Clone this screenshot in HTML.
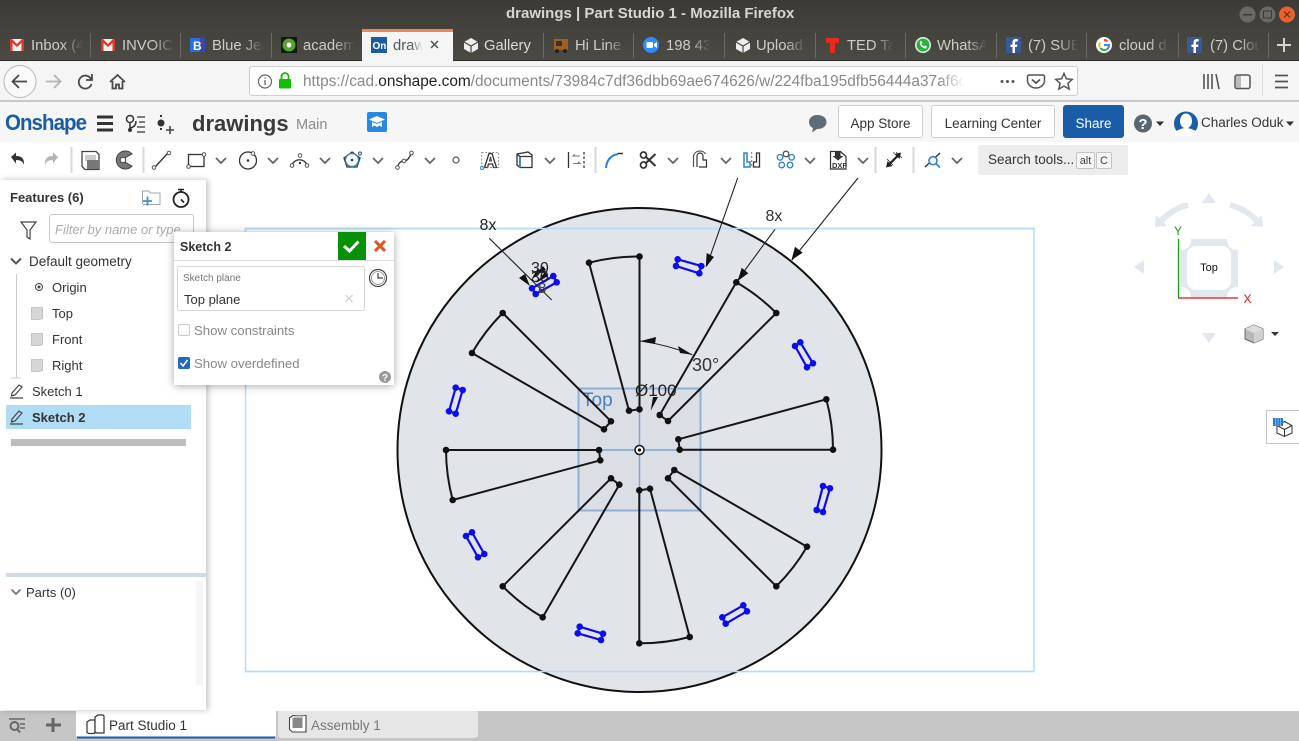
<!DOCTYPE html>
<html><head><meta charset="utf-8"><style>
html,body{margin:0;padding:0;width:1299px;height:741px;overflow:hidden;background:#fff;font-family:"Liberation Sans",sans-serif}
svg{position:absolute;left:0;top:0}
.t{position:absolute;white-space:nowrap;line-height:1}
.tab{position:absolute;top:38px;font-size:14.8px;line-height:16px;color:#cfcdc6;white-space:nowrap;overflow:hidden;width:52px;-webkit-mask-image:linear-gradient(90deg,#000 60%,transparent 100%);mask-image:linear-gradient(90deg,#000 60%,transparent 100%)}
.b{position:absolute;box-sizing:border-box}
.btn{position:absolute;top:105px;height:33px;box-sizing:border-box;border:1px solid #cfcfcf;border-radius:3px;background:#fff;font-size:13.5px;color:#333;text-align:center;line-height:35px}
</style></head><body>

<div class="b" style="left:0;top:0;width:1299px;height:60px;background:linear-gradient(#3b3a36,#4c4a44)"></div>
<div class="b" style="left:0;top:60px;width:1299px;height:40px;background:#f5f5f5"></div>
<div class="b" style="left:0;top:100px;width:1299px;height:2px;background:#c8c8c8"></div>
<div class="b" style="left:0;top:102px;width:1299px;height:40px;background:#f6f6f6"></div>
<div class="b" style="left:0;top:142px;width:1299px;height:36px;background:#fff"></div>
<div class="b" style="left:362px;top:29px;width:91px;height:31px;background:#f5f5f5;border-top:3px solid #ea8560"></div>

<div class="t" style="left:506px;top:6px;font-size:15px;font-weight:bold;color:#d8d6cf">drawings | Part Studio 1 - Mozilla Firefox</div>

<div class="tab" style="left:31px">Inbox (4</div>
<div class="tab" style="left:122px">INVOICE</div>
<div class="tab" style="left:212px">Blue Jeans</div>
<div class="tab" style="left:303px">academy</div>
<div class="tab" style="left:393px;width:30px;color:#555">drawings</div>
<div class="tab" style="left:484px;color:#dedcd5;width:60px;-webkit-mask-image:none;mask-image:none">Gallery</div>
<div class="tab" style="left:575px">Hi Line</div>
<div class="tab" style="left:666px;width:44px">198 434</div>
<div class="tab" style="left:756px;width:50px">Upload</div>
<div class="tab" style="left:847px;width:46px">TED Talks</div>
<div class="tab" style="left:937px;width:50px">WhatsApp</div>
<div class="tab" style="left:1028px;width:50px">(7) SUB</div>
<div class="tab" style="left:1119px;width:50px">cloud d</div>
<div class="tab" style="left:1210px;width:50px">(7) Cloud</div>

<!-- URL bar -->
<div class="b" style="left:249px;top:66px;width:829px;height:30px;background:#fff;border:1px solid #cfcfcf;border-radius:3px"></div>
<div class="t" style="left:303px;top:73px;font-size:15.4px;line-height:17px;color:#888;width:662px;overflow:hidden;-webkit-mask-image:linear-gradient(90deg,#000 96%,transparent 100%);mask-image:linear-gradient(90deg,#000 96%,transparent 100%)">https://cad.<span style="color:#222">onshape.com</span>/documents/73984c7df36dbb69ae674626/w/224fba195dfb56444a37af6c0</div>

<!-- Onshape bar -->
<div class="t" style="left:5px;top:112px;font-size:22px;font-weight:bold;color:#1b5ca6;letter-spacing:-1px;transform:scaleX(.93);transform-origin:left">Onshape</div>
<div class="t" style="left:192px;top:113px;font-size:22px;font-weight:bold;color:#3a3a3a">drawings</div>
<div class="t" style="left:296px;top:118px;font-size:14.5px;color:#8a8a8a">Main</div>
<div class="btn" style="left:838px;width:85px">App Store</div>
<div class="btn" style="left:931px;width:124px">Learning Center</div>
<div class="btn" style="left:1063px;width:61px;background:#1b5ca8;border-color:#1b5ca8;color:#fff">Share</div>
<div class="t" style="left:1201px;top:116px;font-size:13.5px;color:#333">Charles Oduk</div>
<div class="b" style="left:978px;top:145px;width:150px;height:30px;background:#ededed;border-radius:2px"></div>
<div class="t" style="left:988px;top:153px;font-size:13.5px;color:#333">Search tools...</div>
<div class="b" style="left:1076px;top:152px;width:19px;height:17px;background:#f5f5f5;border:1px solid #c4c4c4;border-radius:2px;font-size:11px;text-align:center;line-height:16px;color:#444">alt</div>
<div class="b" style="left:1096px;top:152px;width:16px;height:17px;background:#f5f5f5;border:1px solid #c4c4c4;border-radius:2px;font-size:11px;text-align:center;line-height:16px;color:#444">C</div>

<svg width="1299" height="741" viewBox="0 0 1299 741" style="pointer-events:none">
<!-- plane -->
<rect x="245.500" y="228.500" width="788.500" height="443" fill="#fff" stroke="#b5dcf3" stroke-width="1.500"/>
<circle cx="639.500" cy="450" r="242" fill="#e1e4e8" stroke="#111" stroke-width="2"/>
<line x1="245" y1="228.500" x2="1034" y2="228.500" stroke="#b5dcf3" stroke-width="1.500"/>
<line x1="245" y1="671.500" x2="1034" y2="671.500" stroke="#b5dcf3" stroke-width="1.500"/>
<rect x="578.500" y="388.500" width="122" height="122" fill="#d4d9e3" fill-opacity=".45" stroke="#7da3cf" stroke-width="2" stroke-opacity=".8"/>
<line x1="639.500" y1="388" x2="639.500" y2="511" stroke="#7da3cf" stroke-width="1.500"/>
<line x1="578" y1="450" x2="701" y2="450" stroke="#7da3cf" stroke-width="1.500"/>
<text x="582" y="406" font-size="19" fill="#4a80bd" font-family="Liberation Sans">Top</text>

<!-- wedges -->
<g fill="none" stroke="#151515" stroke-width="2" stroke-linejoin="round">
<path d="M639.500 409.300V256.500A194 194 0 0 0 589 262.700L629 410.700L639.500 409.300"/>
<path d="M736.300 282.300A194 194 0 0 1 776.300 313L668 421L659.700 415L736.300 282.300"/>
<path d="M502.700 313A194 194 0 0 0 472 353L604 429.300L611 421.300L502.700 313"/>
<path d="M826.300 399.300A194 194 0 0 1 833 449.700H679.700L678.300 439.300L826.300 399.300"/>
<path d="M446 450A194 194 0 0 0 452.700 500L600.300 460.300L599 450H446"/>
<path d="M611 478.300L619.300 484.700L542.700 617.300A194 194 0 0 1 502.700 586.300L611 478.300"/>
<path d="M639.300 490.300L650 488.700L689.700 637A194 194 0 0 1 639.300 643.300V490.300"/>
<path d="M674.300 470L668 478.300L776.300 586.300A194 194 0 0 0 807 546.700L674.300 470"/>
</g>
<g fill="#111">
<circle cx="639.500" cy="409.300" r="3.300"/><circle cx="639.500" cy="256.500" r="3.300"/><circle cx="589" cy="262.700" r="3.300"/><circle cx="629" cy="410.700" r="3.300"/>
<circle cx="736.300" cy="282.300" r="3.300"/><circle cx="776.300" cy="313" r="3.300"/><circle cx="668" cy="421" r="3.300"/><circle cx="659.700" cy="415" r="3.300"/>
<circle cx="502.700" cy="313" r="3.300"/><circle cx="472" cy="353" r="3.300"/><circle cx="604" cy="429.300" r="3.300"/><circle cx="611" cy="421.300" r="3.300"/>
<circle cx="826.300" cy="399.300" r="3.300"/><circle cx="833" cy="449.700" r="3.300"/><circle cx="679.700" cy="449.700" r="3.300"/><circle cx="678.300" cy="439.300" r="3.300"/>
<circle cx="446" cy="450" r="3.300"/><circle cx="452.700" cy="500" r="3.300"/><circle cx="600.300" cy="460.300" r="3.300"/><circle cx="599" cy="450" r="3.300"/>
<circle cx="611" cy="478.300" r="3.300"/><circle cx="619.300" cy="484.700" r="3.300"/><circle cx="542.700" cy="617.300" r="3.300"/><circle cx="502.700" cy="586.300" r="3.300"/>
<circle cx="639.300" cy="490.300" r="3.300"/><circle cx="650" cy="488.700" r="3.300"/><circle cx="689.700" cy="637" r="3.300"/><circle cx="639.300" cy="643.300" r="3.300"/>
<circle cx="674.300" cy="470" r="3.300"/><circle cx="668" cy="478.300" r="3.300"/><circle cx="776.300" cy="586.300" r="3.300"/><circle cx="807" cy="546.700" r="3.300"/>
</g>

<!-- slots -->
<g fill="none" stroke="#0c0cf0" stroke-width="2.200">
<path d="M677.700 259.300L701.300 266L699.300 273.300L676 266Z"/>
<path d="M800.300 342.300L813 363.300L807 367.300L795 346Z"/>
<path d="M455.700 387.700L462.700 390L455.700 413.700L449 411.300Z"/>
<path d="M553.300 276L556.700 282.300L535.700 294L532 288.300Z"/>
<path d="M823 486L830 488.300L823 512L816.700 510Z"/>
<path d="M472 532.300L484.300 554L478 557.300L466 536Z"/>
<path d="M579.700 626.700L603 633.700L601 640L577.700 633.300Z"/>
<path d="M743.300 605.300L747 611.300L725.700 623.700L722.300 617.300Z"/>
</g>
<g fill="#0c0cf0">
<circle cx="677.700" cy="259.300" r="3.300"/><circle cx="701.300" cy="266" r="3.300"/><circle cx="699.300" cy="273.300" r="3.300"/><circle cx="676" cy="266" r="3.300"/>
<circle cx="800.300" cy="342.300" r="3.300"/><circle cx="813" cy="363.300" r="3.300"/><circle cx="807" cy="367.300" r="3.300"/><circle cx="795" cy="346" r="3.300"/>
<circle cx="455.700" cy="387.700" r="3.300"/><circle cx="462.700" cy="390" r="3.300"/><circle cx="455.700" cy="413.700" r="3.300"/><circle cx="449" cy="411.300" r="3.300"/>
<circle cx="553.300" cy="276" r="3.300"/><circle cx="556.700" cy="282.300" r="3.300"/><circle cx="535.700" cy="294" r="3.300"/><circle cx="532" cy="288.300" r="3.300"/>
<circle cx="823" cy="486" r="3.300"/><circle cx="830" cy="488.300" r="3.300"/><circle cx="823" cy="512" r="3.300"/><circle cx="816.700" cy="510" r="3.300"/>
<circle cx="472" cy="532.300" r="3.300"/><circle cx="484.300" cy="554" r="3.300"/><circle cx="478" cy="557.300" r="3.300"/><circle cx="466" cy="536" r="3.300"/>
<circle cx="579.700" cy="626.700" r="3.300"/><circle cx="603" cy="633.700" r="3.300"/><circle cx="601" cy="640" r="3.300"/><circle cx="577.700" cy="633.300" r="3.300"/>
<circle cx="743.300" cy="605.300" r="3.300"/><circle cx="747" cy="611.300" r="3.300"/><circle cx="725.700" cy="623.700" r="3.300"/><circle cx="722.300" cy="617.300" r="3.300"/>
</g>

<!-- annotations -->
<g stroke="#222" stroke-width="1.100" fill="none">
<line x1="737.700" y1="178" x2="706.700" y2="266"/>
<line x1="858" y1="178" x2="792" y2="260"/>
<line x1="775" y1="229.300" x2="737.700" y2="280"/>
<line x1="489.300" y1="238.300" x2="551.700" y2="300"/>
<path d="M640.300 341Q668 345 692.300 354.700"/>
</g>
<g fill="#111">
<polygon points="705.700,267.500 706.700,253 714,257"/>
<polygon points="791.500,260 795,246.700 802.700,252.700"/>
<polygon points="737.700,281 741.700,267.700 748.300,273.300"/>
<polygon points="530,286 519,278 525,274"/>
<polygon points="641,341 656,337 655,344"/>
<polygon points="692.500,354.700 680,353 678,346"/>
<polygon points="650.700,410.700 653,397 658,397"/>
<polygon points="531,280 538,268 541,272"/>
<polygon points="536,283 545,272 548,276"/>
<polygon points="533,277 543,266 546,270"/>
</g>
<g font-family="Liberation Sans" font-size="16" fill="#222">
<text x="479.500" y="230">8x</text>
<text x="765.500" y="221" fill="#333">8x</text>
<text x="692" y="371" font-size="18" fill="#333">30°</text>
<text x="635" y="396" font-size="17" fill="#222">Ø100</text>
<text x="531" y="273" font-size="16">30</text>
<text x="531" y="282" font-size="16">30</text>
<text x="538" y="293" font-size="15" fill="#444">8</text>
</g>
<circle cx="639.500" cy="450" r="4.500" fill="#fff" stroke="#111" stroke-width="1.500"/><circle cx="639.500" cy="450" r="1.600" fill="#111"/>

<!-- nav cube -->
<g fill="#e3e8ee">
<polygon points="1209,193 1216,203 1202,203"/>
<polygon points="1134,267 1144,260 1144,274"/>
<polygon points="1284,267 1274,260 1274,274"/>
<polygon points="1209,343 1202,333 1216,333"/>
<polygon points="1155,227 1156,215 1167,226"/>
<polygon points="1263,227 1262,215 1251,226"/>
<path d="M1191 239H1227Q1227 250 1238 250V287Q1227 287 1227 298H1191Q1191 287 1180 287V250Q1191 250 1191 239Z"/>
</g>
<path d="M1188 205Q1172 209 1161 221M1230 205Q1246 209 1257 221" fill="none" stroke="#e3e8ee" stroke-width="6"/>
<rect x="1187" y="246" width="44" height="44" rx="9" fill="#fff"/>
<line x1="1178.500" y1="239" x2="1178.500" y2="298" stroke="#10a010" stroke-width="1.300"/>
<line x1="1178" y1="298" x2="1238" y2="298" stroke="#e01010" stroke-width="1.300"/>
<text x="1174" y="235" font-family="Liberation Sans" font-size="12" fill="#10a010">Y</text>
<text x="1243.500" y="303" font-family="Liberation Sans" font-size="12" fill="#e01010">X</text>
<text x="1209" y="271" text-anchor="middle" font-family="Liberation Sans" font-size="11" fill="#111">Top</text>
<path d="M1245 329L1254 325L1263 329V339L1254 343L1245 339Z" fill="#b8b8b8" stroke="#666"/><path d="M1254 333L1263 329V339L1254 343Z" fill="#d0d0d0"/><path d="M1245 329L1254 325L1263 329L1254 333Z" fill="#ddd"/><polygon points="1271,332 1279,332 1275,336" fill="#333"/>
<rect x="1266.500" y="410.500" width="40" height="33" fill="#fff" stroke="#c4c4c4"/>
<path d="M1284.500 421.500L1292 425.500V433L1284.500 436.500L1277 433V425.500ZM1277 425.500L1284.500 429.500L1292 425.500M1284.500 429.500V436.500" fill="none" stroke="#333"/>
<rect x="1273" y="418" width="10" height="8" fill="#2b79c9"/><path d="M1275.500 418v8M1278 418v8M1280.500 418v8" stroke="#bcd8f2" stroke-width=".6"/>

<!-- window buttons -->
<circle cx="1247.500" cy="14.500" r="8" fill="#6a6963"/><rect x="1243" y="14" width="9" height="1.500" fill="#3a3934"/>
<circle cx="1267.500" cy="14.500" r="8" fill="#6a6963"/><rect x="1263.500" y="11" width="8" height="7" fill="none" stroke="#3a3934"/>
<circle cx="1287" cy="14.500" r="8" fill="#e8622c"/><path d="M1284 11.500l6 6m0-6l-6 6" stroke="#6d2a10" stroke-width="1.200"/>

<!-- tab separators -->
<g stroke="#6c6a64" stroke-width="1">
<path d="M90.500 33V58M180.500 33V58M271.500 33V58M543.500 33V58M633.500 33V58M724.500 33V58M815.500 33V58M905.500 33V58M996.500 33V58M1086.500 33V58M1178.500 33V58M1268.500 33V58"/>
</g>
<line x1="0" y1="60.500" x2="362" y2="60.500" stroke="#2c2b28"/><line x1="453" y1="60.500" x2="1299" y2="60.500" stroke="#2c2b28"/>

<!-- favicons -->
<g>
<rect x="10" y="39" width="14" height="12" fill="#eee"/><path d="M10 39h2l5 5 5-5h2v12h-2.500v-8l-4.500 4-4.500-4v8H10Z" fill="#d93a30"/>
<rect x="101" y="39" width="14" height="12" fill="#eee"/><path d="M101 39h2l5 5 5-5h2v12h-2.500v-8l-4.500 4-4.500-4v8H101Z" fill="#d93a30"/>
<rect x="190" y="38" width="15" height="14" rx="1" fill="#2a6fdb"/><rect x="200" y="38" width="5" height="14" fill="#3748b0"/><text x="193" y="50" font-size="12" font-weight="bold" fill="#fff" font-family="Liberation Sans">B</text>
<rect x="281" y="37" width="16" height="16" fill="#0c1c10"/><circle cx="289" cy="45" r="6.500" fill="#5aa02c"/><circle cx="289" cy="45" r="2.500" fill="#fff"/>
<rect x="371" y="37" width="16" height="16" fill="#1b5ca6"/><text x="372.500" y="49" font-size="10" font-weight="bold" fill="#fff" font-family="Liberation Sans">On</text>
<path d="M431 41l7 7m0-7l-7 7" stroke="#555" stroke-width="1.500"/>
<path d="M471 38l7 4v7l-7 4-7-4v-7Z" fill="#eee"/><path d="M464 42l7 4 7-4M471 46v7" stroke="#46443f" stroke-width="1.200" fill="none"/>
<rect x="554" y="39" width="14" height="11" fill="#a06020"/><rect x="556" y="41" width="6" height="5" fill="#333"/><circle cx="557" cy="51" r="2" fill="#222"/><circle cx="565" cy="51" r="2" fill="#222"/>
<circle cx="651" cy="45" r="8" fill="#2d8cff"/><rect x="646.500" y="42" width="6.500" height="6" rx="1" fill="#fff"/><polygon points="654,44 657,42 657,48 654,46" fill="#fff"/>
<path d="M743 38l7 4v7l-7 4-7-4v-7Z" fill="#eee"/><path d="M736 42l7 4 7-4M743 46v7" stroke="#46443f" stroke-width="1.200" fill="none"/>
<path d="M826 38h13v5h-4v10h-5V43h-4Z" fill="#e62b1e"/>
<circle cx="923" cy="45" r="8" fill="#eee"/><circle cx="923" cy="45" r="6.500" fill="#25b33c"/><path d="M920 41.500c-1 3 2 7 6 7l1-2-2-1-1 1c-1-.5-2-1.500-2.500-2.500l1-1-1-2Z" fill="#fff"/>
<rect x="1006" y="37" width="15" height="16" fill="#3b5998"/><path d="M1015 53v-6h2l.4-2.500H1015v-1.500c0-1 .5-1.500 1.500-1.500h1.200V39h-2c-2 0-3.200 1.300-3.200 3.500v2h-2V47h2v6Z" fill="#fff"/>
<circle cx="1104" cy="45" r="8" fill="#fff"/><path d="M1104 40a5 5 0 0 1 3.500 1.400" stroke="#ea4335" stroke-width="2" fill="none"/><path d="M1100 42.500a5 5 0 0 0 0 5" stroke="#fbbc05" stroke-width="2" fill="none"/><path d="M1100.500 48a5 5 0 0 0 7 1" stroke="#34a853" stroke-width="2" fill="none"/><path d="M1104 45h5a5 5 0 0 1-1.500 4" stroke="#4285f4" stroke-width="2" fill="none"/>
<rect x="1187" y="37" width="15" height="16" fill="#3b5998"/><path d="M1196 53v-6h2l.4-2.500H1196v-1.500c0-1 .5-1.500 1.500-1.500h1.200V39h-2c-2 0-3.200 1.300-3.200 3.500v2h-2V47h2v6Z" fill="#fff"/>
<path d="M1284 38v14M1277 45h14" stroke="#d5d3cc" stroke-width="2"/>
</g>

<!-- nav icons -->
<circle cx="20" cy="81.500" r="16" fill="#fafafa" stroke="#b8b8b8"/>
<path d="M27 81.500H13M19 75l-6.500 6.500L19 88" fill="none" stroke="#4a4a4a" stroke-width="1.800"/>
<path d="M61 81.500H46M54 75l6.500 6.500L54 88" fill="none" stroke="#b4b4b4" stroke-width="1.800"/>
<path d="M91 79A6.500 6.500 0 1 0 91.500 84M92 74v6h-6" fill="none" stroke="#4a4a4a" stroke-width="1.800"/>
<path d="M110 82l7.500-7 7.500 7M112.500 81v7.500h3.500v-4h3v4h3.500V81" fill="none" stroke="#4a4a4a" stroke-width="1.800"/>
<circle cx="265" cy="81.500" r="6.500" fill="none" stroke="#666" stroke-width="1.200"/><path d="M265 80v5M265 77.500v1.200" stroke="#666" stroke-width="1.300"/>
<rect x="279" y="79" width="12" height="9.500" rx="1" fill="#12bc00"/><path d="M281.500 79v-2.500a3.500 3.500 0 0 1 7 0V79" fill="none" stroke="#12bc00" stroke-width="1.800"/>
<g fill="#555"><circle cx="1002" cy="81.500" r="1.500"/><circle cx="1007.500" cy="81.500" r="1.500"/><circle cx="1013" cy="81.500" r="1.500"/></g>
<path d="M1029 75h14a1.500 1.500 0 0 1 1.500 1.500v4a8.500 7.500 0 0 1-17 0v-4A1.500 1.500 0 0 1 1029 75Z" fill="none" stroke="#555" stroke-width="1.500"/><path d="M1032 79.500l4 3.500 4-3.500" fill="none" stroke="#555" stroke-width="1.800"/>
<path d="M1064 73.500l2.400 5.300 5.800.6-4.300 3.900 1.200 5.700-5.100-2.900-5.100 2.900 1.200-5.700-4.300-3.900 5.800-.6Z" fill="none" stroke="#555" stroke-width="1.500"/>
<path d="M1204 74v15M1208 74v15M1212 74v15M1216 74l3 15" stroke="#555" stroke-width="1.600" fill="none"/>
<rect x="1235" y="75" width="15" height="13.500" rx="2" fill="none" stroke="#555" stroke-width="1.500"/><rect x="1236" y="76" width="5" height="11.500" fill="#bbb"/>
<line x1="1262.500" y1="64" x2="1262.500" y2="96" stroke="#dcdcdc"/>
<path d="M1275 75.500h13M1275 81.500h13M1275 87.500h13" stroke="#555" stroke-width="1.800"/>

<!-- Onshape bar icons -->
<path d="M97 117h16M97 123.500h16M97 130h16" stroke="#333" stroke-width="3"/>
<circle cx="130" cy="119" r="3.500" fill="none" stroke="#333" stroke-width="1.500"/><circle cx="130" cy="130" r="2" fill="#333"/><path d="M130 122v7M130 128q6-1 6-7" fill="none" stroke="#333" stroke-width="1.500"/><path d="M137 117h8M139 122h6M137 127h8M137 132h8" stroke="#555" stroke-width="1.500"/>
<circle cx="161" cy="123" r="3.500" fill="#333"/><path d="M161 115v3M161 128v3" stroke="#333" stroke-width="2" stroke-dasharray="2 2.500"/><path d="M170 126v8M166 130h8" stroke="#444" stroke-width="1.600"/>
<rect x="367" y="112" width="20" height="20" rx="2" fill="#2b88e0"/><path d="M377 116l8 3.500-8 3.500-8-3.500Z" fill="#fff"/><path d="M372 122v5l2.500-1.500 2.500 1.500 2.500-1.500 2.500 1.500v-5l-5 2Z" fill="#fff"/>
<path d="M817 115c6 0 9.500 3 9.500 7s-3.500 7-9.500 7l-5 3.500 1-4.500c-2.500-1-4-3.500-4-6 0-4 3.500-7 8-7Z" fill="#5f6b75"/>
<circle cx="1143" cy="123.500" r="9" fill="#5a6670"/><text x="1143" y="129" text-anchor="middle" font-family="Liberation Sans" font-weight="bold" font-size="15" fill="#fff">?</text>
<polygon points="1156,121.500 1164,121.500 1160,126" fill="#333"/>
<circle cx="1186" cy="123.500" r="12" fill="#1b5ca8"/><ellipse cx="1186" cy="121" rx="6" ry="7.500" fill="#fff"/><path d="M1175 132q11-8 22 0v4h-22Z" fill="#fff"/><polygon points="1286,121.500 1294,121.500 1290,126" fill="#333"/>

<!-- Toolbar icons -->
<path d="M12 158l5-4.500V157c5 0 8.500 2 8 9-1-3.500-3.500-5-8-5v3.500Z" fill="#333" transform="translate(-1 -1)"/>
<path d="M57 158l-5-4.500V157c-5 0-8.500 2-8 9 1-3.500 3.500-5 8-5v3.500Z" fill="#b4b4b4" transform="translate(1 -1)"/>
<path d="M71.500 147v26M143.500 147v26M875.500 147v26M913.500 147v26M595.500 147v26" stroke="#d8d8d8" stroke-width="2"/>
<path d="M82 151.500h14l3 3v15H85l-3-3Z" fill="#fff" stroke="#444" stroke-width="1.300"/>
<rect x="85" y="155" width="11" height="6" fill="#ccc"/>
<rect x="87" y="160" width="12" height="9" fill="#777"/>
<path d="M132 154A9 9 0 1 0 132 166L125.500 162.500V157.500Z" fill="#777" stroke="#444" stroke-width="1"/><circle cx="123" cy="160" r="2.800" fill="#fff" stroke="#444"/>
<!-- sketch tools -->
<g fill="none" stroke="#333" stroke-width="1.300">
<line x1="155" y1="167" x2="168" y2="153"/>
<rect x="188.500" y="154.500" width="15.500" height="12"/>
<circle cx="248" cy="160.500" r="8.500"/>
<path d="M292 165a8 8 0 0 1 15 0"/>
<path d="M352 152L360 158L357 167H347L344 158Z"/>
<path d="M398 167c0-4 3-6 6-6s5-2 7-7"/>
<path d="M484.500 167.500L489 153.500H492L496.500 167.500H493.500L492.500 164H488.500L487.500 167.500Z"/>
<path d="M489.500 161L490.500 157L491.500 161Z" stroke-width="1"/>
<path d="M517 154L528 152L532 155V167.500H520L517 165ZM517 154L520 156.500H532"/>
<path d="M568.500 152v16"/>
<path d="M584 152v16" stroke-dasharray="2.500 2"/>
<path d="M893 153H895M887 159l6 6M896 152l6 6" stroke-width=".8"/>
<path d="M925 167L940 153"/>
</g>
<circle cx="456" cy="160" r="3" fill="none" stroke="#555" stroke-width="1.200"/>
<path d="M580 156h-7l2-1.500M580 156l-2 0M573 163.500h7l-2-1.500" fill="none" stroke="#777" stroke-width="1.100"/>
<g fill="#fff" stroke="#444" stroke-width=".9">
<circle cx="154" cy="167.500" r="1.800"/><circle cx="169" cy="153" r="1.800"/>
<circle cx="188.500" cy="166.500" r="1.800"/><circle cx="204" cy="154.500" r="1.800"/>
<circle cx="253" cy="153.500" r="1.800"/>
<circle cx="292" cy="165.500" r="1.800"/><circle cx="300" cy="155.500" r="1.800"/><circle cx="307" cy="165.500" r="1.800"/>
<circle cx="360" cy="153.500" r="1.500"/>
<circle cx="397.500" cy="167.500" r="1.800"/><circle cx="404" cy="161" r="1.800"/><circle cx="411.500" cy="153" r="1.800"/>
</g>
<circle cx="248" cy="160.500" r="1.300" fill="#333"/><circle cx="300" cy="163" r="1.200" fill="#333"/>
<circle cx="352" cy="160" r="6.500" fill="none" stroke="#2f80c8" stroke-width="1.300"/><circle cx="352" cy="160" r="1.300" fill="#333"/>
<rect x="481.700" y="152.500" width="17" height="15" fill="none" stroke="#777" stroke-width=".8" stroke-dasharray="2 1.500"/>
<circle cx="482" cy="168" r="1.500" fill="#fff" stroke="#2f80c8"/>
<path d="M520 157v10.500" stroke="#2f80c8" stroke-width="1.800"/>
<path d="M606 168q1-12 12-14" fill="none" stroke="#2f80c8" stroke-width="2"/><path d="M618 153.500h5" stroke="#333" stroke-width="1.500"/>
<!-- scissors -->
<g fill="none" stroke="#333">
<circle cx="643.500" cy="155" r="3" stroke-width="1.700"/><circle cx="643.500" cy="165" r="3" stroke-width="1.700"/>
<path d="M646 157L655.500 166M646 163L655.500 154" stroke-width="2"/>
</g>
<!-- offset -->
<path d="M697 167V156a3 3 0 0 1 6 0V160H706.500V167H699" fill="none" stroke="#333" stroke-width="1.200"/>
<path d="M693.500 167V156a6.500 6 0 0 1 12-2" fill="none" stroke="#555" stroke-width="1.200"/>
<!-- mirror -->
<path d="M744 153V167H750V162H747V153Z" fill="none" stroke="#2f80c8" stroke-width="1.500"/>
<path d="M759.500 153V167H753.500V162H756.500V153Z" fill="none" stroke="#333" stroke-width="1.300"/>
<path d="M751.700 152v16" stroke="#777" stroke-dasharray="2 2"/>
<!-- pattern -->
<g fill="none" stroke="#2f80c8" stroke-width="1.300"><circle cx="780" cy="157.300" r="2.800"/><circle cx="791.700" cy="157.300" r="2.800"/><circle cx="781.700" cy="165" r="2.800"/><circle cx="790" cy="165" r="2.800"/></g>
<circle cx="786" cy="154" r="2.800" fill="none" stroke="#555" stroke-width="1.300"/>
<!-- dxf -->
<path d="M830.500 151.500h10l5.500 5v12.500h-15.500Z" fill="#fff" stroke="#333" stroke-width="1.200"/><path d="M835 151.500v4.500h-2.500l5.500 4.500 5.500-4.500h-3v-4.500Z" fill="#333"/>
<text x="832" y="168" font-size="7.500" font-weight="bold" font-family="Liberation Sans" fill="#333">DXF</text>
<!-- dimension -->
<path d="M889 164.500L898 155.500" stroke="#222" stroke-width="2.200"/><polygon points="901,152.500 899.500,159 894.500,154" fill="#222"/><polygon points="886,167.500 887.500,161 892.500,166" fill="#222"/>
<!-- construction -->
<circle cx="933" cy="160.700" r="4" fill="#fff" stroke="#2f80c8" stroke-width="1.600"/><path d="M936 163.700l4 3.800" stroke="#2f80c8" stroke-width="1.600"/>
<!-- chevrons -->
<g fill="none" stroke="#666" stroke-width="1.800">
<path d="M216 158l5 5 5-5M268 158l5 5 5-5M320 158l5 5 5-5M373 158l5 5 5-5M425 158l5 5 5-5M545 158l5 5 5-5M668 158l5 5 5-5M721 158l5 5 5-5M805 158l5 5 5-5M858 158l5 5 5-5M952 158l5 5 5-5"/>
</g>

<!-- bottom tabs -->
<rect x="0" y="711" width="1299" height="30" fill="#c6c6c6"/>
<path d="M76 711H276V734Q276 738 272 738H80Q76 738 76 734Z" fill="#fff"/>
<path d="M77 737.500H275" stroke="#1b5ca8" stroke-width="2"/>
<path d="M278 711H478V734Q478 738 474 738H282Q278 738 278 734Z" fill="#e6e6e6"/>
<path d="M9 719h16" stroke="#666" stroke-width="1.500"/><circle cx="14.500" cy="726" r="4" fill="none" stroke="#666" stroke-width="2"/><path d="M17 729l3 3.500" stroke="#666" stroke-width="2"/><path d="M20 724h5M20 728h5" stroke="#666" stroke-width="1.500"/>
<path d="M53 718v14M46 725h15" stroke="#666" stroke-width="3"/>
<g fill="#fff" stroke="#333" stroke-width="1.200"><path d="M87 722l3-2h5v13l-2 .5h-4l-2-1Z"/><path d="M95 717l3-2h5l1 1v17h-7l-2-1Z"/></g>
<path d="M289.500 718L293 715.500H306V732H292.500L289.500 729.500Z" fill="#fff" stroke="#444" stroke-width="1.100"/><rect x="292.500" y="718" width="10" height="10" fill="#888"/><path d="M292.500 718l3-2.500h9l-2 2.500Z" fill="#c4c4c4"/>
</svg>

<div class="t" style="left:109px;top:719px;font-size:13.5px;color:#333">Part Studio 1</div>
<div class="t" style="left:311px;top:719px;font-size:13.5px;color:#777">Assembly 1</div>

<!-- Features panel -->
<div class="b" style="left:0;top:180px;width:206px;height:530px;background:#fff;box-shadow:2px 0 6px rgba(0,0,0,.25)"></div>
<div class="t" style="left:10px;top:191px;font-size:13px;font-weight:bold;color:#333">Features (6)</div>
<div class="b" style="left:49px;top:214px;width:145px;height:29px;border:1px solid #c8c8c8;border-radius:3px;background:#fff"></div>
<div class="t" style="left:55px;top:223px;font-size:13px;font-style:italic;color:#aaa">Filter by name or type</div>
<div class="t" style="left:29px;top:255px;font-size:13.5px;color:#333">Default geometry</div>
<div class="t" style="left:52px;top:281px;font-size:13px;color:#333">Origin</div>
<div class="t" style="left:52px;top:307px;font-size:13px;color:#333">Top</div>
<div class="t" style="left:52px;top:333px;font-size:13px;color:#333">Front</div>
<div class="t" style="left:52px;top:359px;font-size:13px;color:#333">Right</div>
<div class="t" style="left:32px;top:385px;font-size:13px;color:#333">Sketch 1</div>
<div class="b" style="left:6px;top:405px;width:185px;height:24px;background:#b0dcf5"></div>
<div class="t" style="left:32px;top:411px;font-size:13px;font-weight:bold;color:#333">Sketch 2</div>
<div class="b" style="left:11px;top:439px;width:175px;height:7px;background:#bdbdbd"></div>
<div class="b" style="left:6px;top:573px;width:200px;height:4px;background:#cfdbe6"></div>
<div class="t" style="left:26px;top:586px;font-size:13px;color:#333">Parts (0)</div>
<div class="b" style="left:196px;top:581px;width:7px;height:104px;background:#f5f6f8"></div>

<!-- Sketch dialog -->
<div class="b" style="left:174px;top:232px;width:220px;height:153px;background:#fff;box-shadow:0 1px 8px rgba(0,0,0,.35)"></div>
<div class="b" style="left:174px;top:260px;width:220px;height:1px;background:#dcdcdc"></div>
<div class="t" style="left:180px;top:241px;font-size:12.5px;font-weight:bold;color:#333">Sketch 2</div>
<div class="b" style="left:338px;top:232px;width:28px;height:28px;background:#079107"></div>
<div class="b" style="left:177px;top:266px;width:188px;height:45px;border:1px solid #d8d8d8;border-radius:2px"></div>
<div class="t" style="left:183px;top:274px;font-size:10px;color:#777">Sketch plane</div>
<div class="t" style="left:184px;top:293px;font-size:13px;color:#333">Top plane</div>
<div class="b" style="left:178px;top:324px;width:12px;height:12px;border:1px solid #ccc;border-radius:2px;background:#fff"></div>
<div class="t" style="left:194px;top:324px;font-size:13.2px;color:#888">Show constraints</div>
<div class="b" style="left:178px;top:357px;width:12px;height:12px;background:#2566c0;border-radius:2px"></div>
<div class="t" style="left:194px;top:357px;font-size:13.2px;color:#888">Show overdefined</div>

<svg width="1299" height="741" viewBox="0 0 1299 741">
<path d="M142.500 204v-13h6l2 2h9.500v11.500h-17" fill="none" stroke="#9aa5ae"/><path d="M143 201h9M147.500 196.500v9" stroke="#4a90d0" stroke-width="1.800"/>
<circle cx="181" cy="199.500" r="7.500" fill="none" stroke="#222" stroke-width="1.800"/><path d="M178 189.500h6M181 190v2M181 199.500l3 3" stroke="#222" stroke-width="1.600" fill="none"/>
<path d="M21 222h15l-6 8v9l-3-2v-7Z" fill="none" stroke="#444" stroke-width="1.200"/>
<path d="M11 258.500l5 5 5-5" fill="none" stroke="#555" stroke-width="2"/>
<path d="M11.500 589.500l4.500 4.500 4.500-4.500" fill="none" stroke="#777" stroke-width="1.800"/>
<path d="M16.500 274v104M11 378h10" stroke="#ccc" stroke-width="1"/>
<circle cx="39" cy="287" r="3.500" fill="none" stroke="#444"/><circle cx="39" cy="287" r="1.500" fill="#444"/>
<g fill="#d6d6d6" stroke="#bbb" stroke-width=".8">
<path d="M31.500 307.500h11v11l-3 1h-8Z"/><path d="M31.500 333.500h11v11l-3 1h-8Z"/><path d="M31.500 359.500h11v11l-3 1h-8Z"/>
</g>
<g fill="none" stroke="#444" stroke-width="1.200">
<path d="M12 393l7-8 3 2-7 8-3.500 1ZM10 398h13"/>
<path d="M12 419l7-8 3 2-7 8-3.500 1ZM10 424h13"/>
</g>
<path d="M344 246l5.500 5 9-9.500" fill="none" stroke="#fff" stroke-width="3"/>
<path d="M375 241l10 10m0-10l-10 10" stroke="#e25222" stroke-width="3"/>
<path d="M345.500 295l7 7m0-7l-7 7" stroke="#ccc" stroke-width="1.200"/>
<circle cx="378" cy="278" r="8.500" fill="none" stroke="#444" stroke-width="1.200"/><circle cx="378" cy="278" r="6.500" fill="none" stroke="#888" stroke-width=".8"/><path d="M378 273v5h5" fill="none" stroke="#444" stroke-width="1.200"/>
<path d="M180.500 363l2.500 3 4.500-6" fill="none" stroke="#fff" stroke-width="1.600"/>
<circle cx="385" cy="377" r="6" fill="#999"/><text x="385" y="381" text-anchor="middle" font-size="10" font-weight="bold" font-family="Liberation Sans" fill="#fff">?</text>
</svg>
</body></html>
